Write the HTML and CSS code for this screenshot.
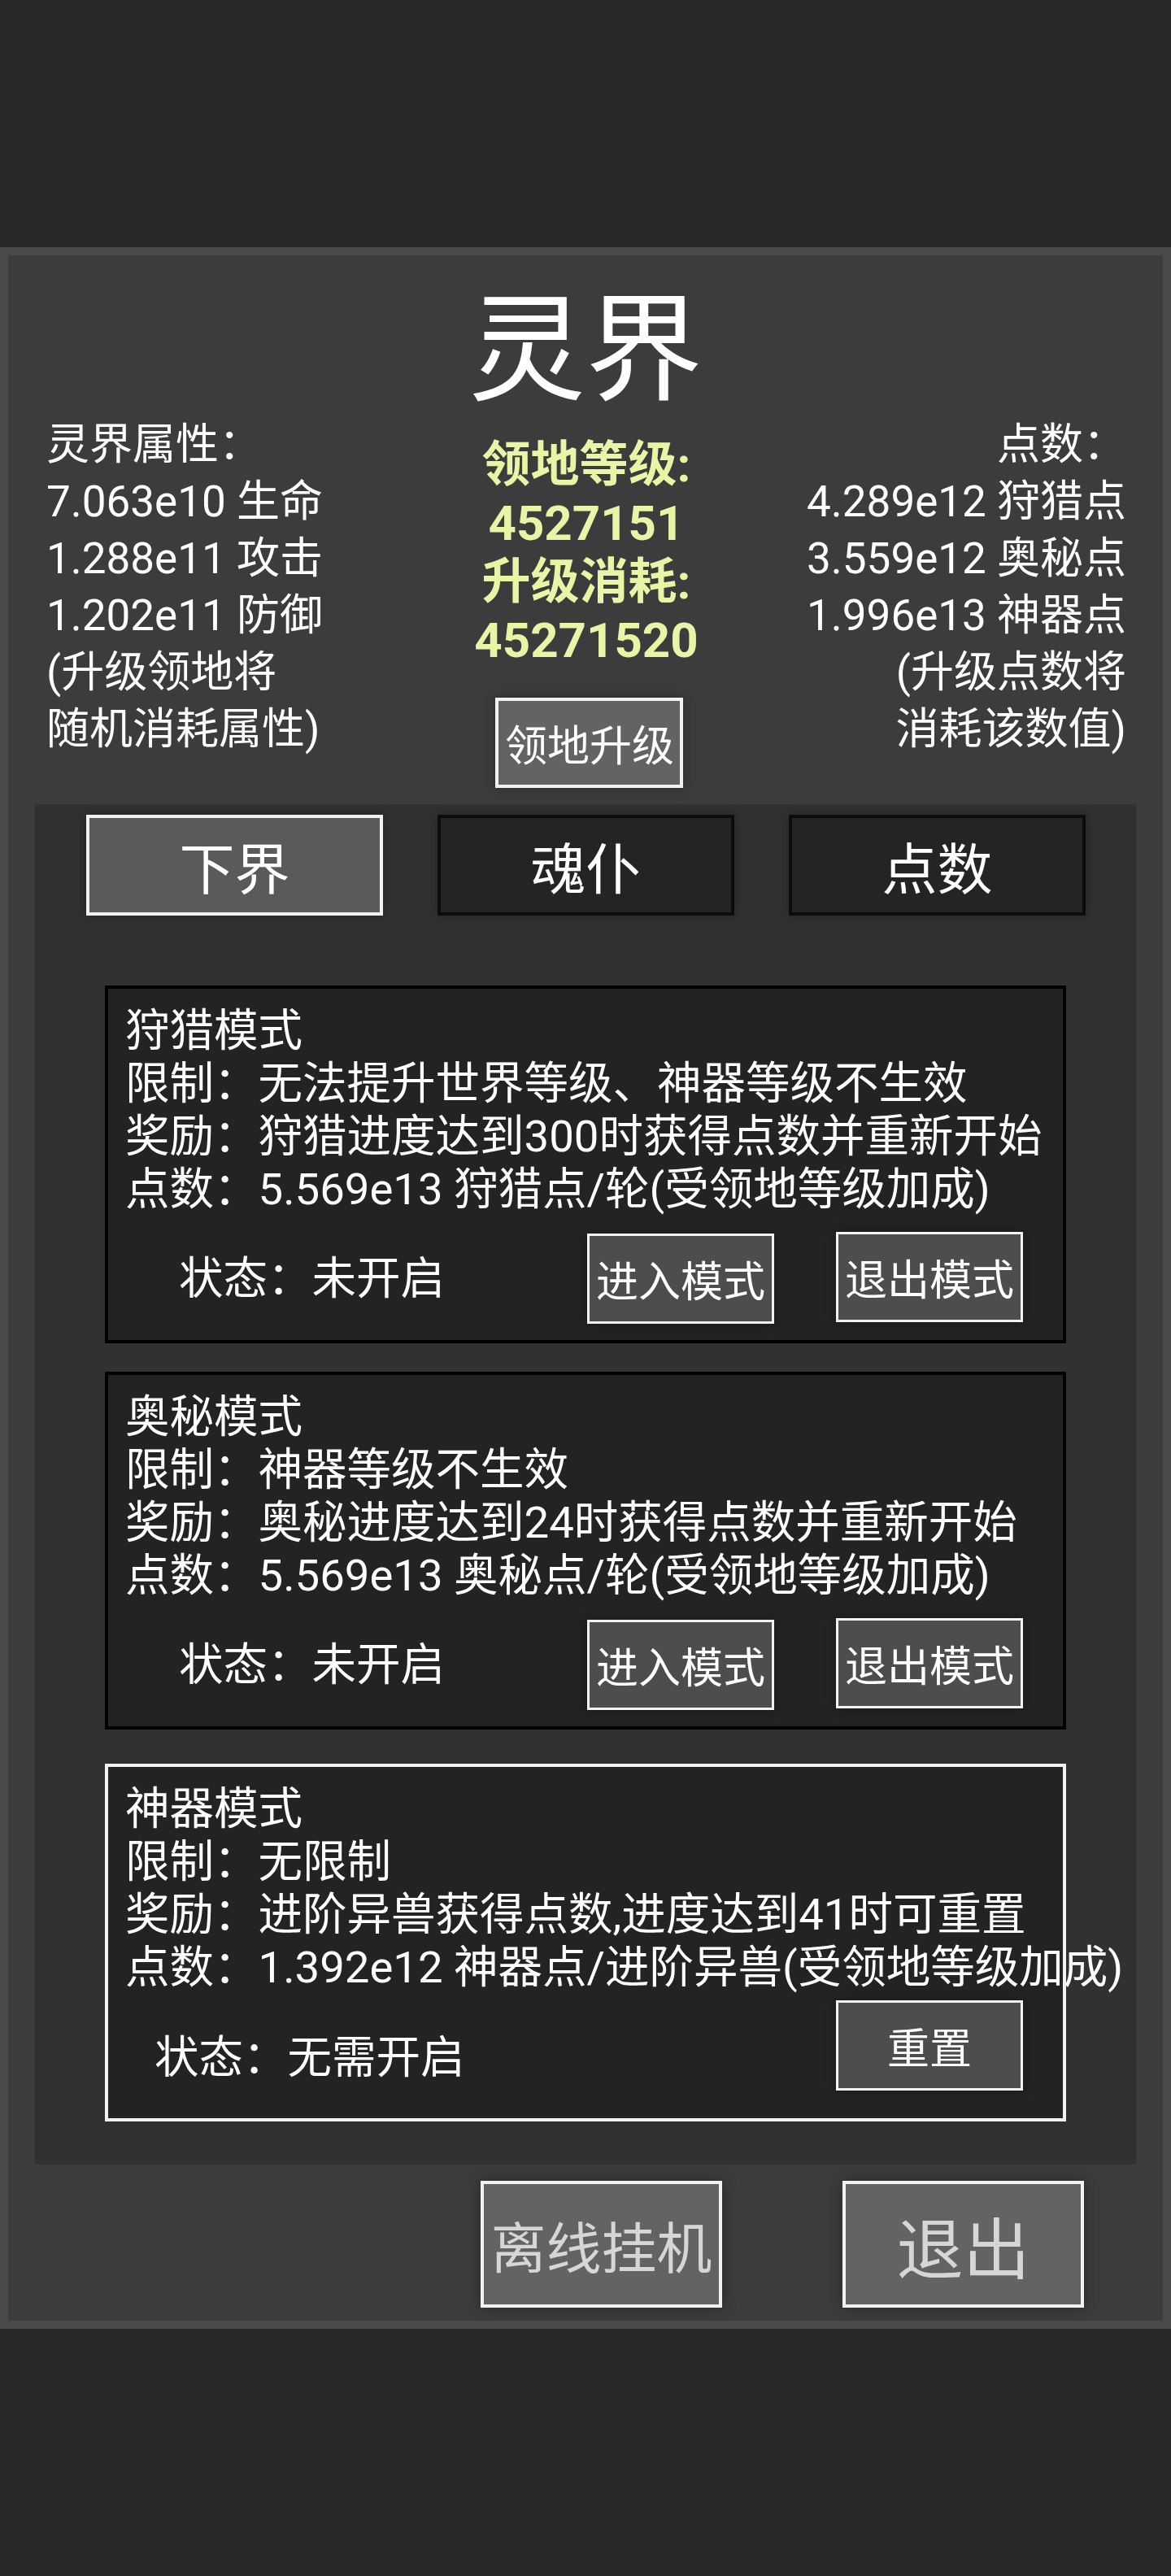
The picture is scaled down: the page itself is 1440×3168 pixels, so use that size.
FILE: index.html
```html
<!DOCTYPE html>
<html lang="zh-CN">
<head>
  <meta charset="UTF-8">
  <meta name="viewport" content="width=device-width, initial-scale=1.0">
  <title>灵界</title>
  <link rel="stylesheet" href="styles.css">
</head>
<body>
  <div id="realm" class="panel">
    <h1 class="title">灵界</h1>

    <div class="info">
      <div class="attrs">
        <p>灵界属性：</p>
        <p>7.063e10 生命</p>
        <p>1.288e11 攻击</p>
        <p>1.202e11 防御</p>
        <p>(升级领地将</p>
        <p>随机消耗属性)</p>
      </div>

      <div class="level">
        <p class="level-text">领地等级:</p>
        <p class="level-text">4527151</p>
        <p class="level-text">升级消耗:</p>
        <p class="level-text">45271520</p>
        <button id="upgrade-btn" class="upgrade-btn">领地升级</button>
      </div>

      <div class="points">
        <p>点数：</p>
        <p>4.289e12 狩猎点</p>
        <p>3.559e12 奥秘点</p>
        <p>1.996e13 神器点</p>
        <p>(升级点数将</p>
        <p>消耗该数值)</p>
      </div>
    </div>

    <div class="tab-box">
      <div class="tabs">
        <button class="tab active">下界</button>
        <button class="tab">魂仆</button>
        <button class="tab">点数</button>
      </div>

      <div class="modes">
        <div class="card">
          <p>狩猎模式</p>
          <p>限制：无法提升世界等级、神器等级不生效</p>
          <p>奖励：狩猎进度达到300时获得点数并重新开始</p>
          <p>点数：5.569e13 狩猎点/轮(受领地等级加成)</p>
          <div class="status-row">
            <span class="status">状态：未开启</span>
            <button class="mode-btn enter">进入模式</button>
            <button class="mode-btn leave">退出模式</button>
          </div>
        </div>

        <div class="card">
          <p>奥秘模式</p>
          <p>限制：神器等级不生效</p>
          <p>奖励：奥秘进度达到24时获得点数并重新开始</p>
          <p>点数：5.569e13 奥秘点/轮(受领地等级加成)</p>
          <div class="status-row">
            <span class="status">状态：未开启</span>
            <button class="mode-btn enter">进入模式</button>
            <button class="mode-btn leave">退出模式</button>
          </div>
        </div>

        <div class="card artifact">
          <p>神器模式</p>
          <p>限制：无限制</p>
          <p>奖励：进阶异兽获得点数,进度达到41时可重置</p>
          <p>点数：1.392e12 神器点/进阶异兽(受领地等级加成)</p>
          <div class="status-row">
            <span class="status">状态：无需开启</span>
            <button class="mode-btn enter">重置</button>
          </div>
        </div>
      </div>
    </div>

    <div class="footer">
      <button class="footer-btn">离线挂机</button>
      <button class="footer-btn exit-btn">退出</button>
    </div>
  </div>
</body>
</html>
```

FILE: styles.css
```css
* {
  margin: 0;
  padding: 0;
  box-sizing: border-box;
}

body {
  font-family: Roboto, "Noto Sans CJK SC", sans-serif;
  background: #282828;
  color: white;
  min-height: 3168px;
}

button {
  font-family: inherit;
  color: white;
  display: flex;
  justify-content: center;
  align-items: center;
  cursor: pointer;
}

.panel {
  margin-top: 304px;
  border: 10px solid #4a4a4a;
  background: #3c3c3c;
  padding: 0 33px 16px;
}

.title {
  font-size: 144px;
  line-height: 144px;
  font-weight: normal;
  text-align: center;
  padding-top: 46px;
}

.info {
  display: grid;
  grid-template-columns: 1fr auto 1fr;
  margin-top: 8px;
  padding: 0 12px 0 14px;
}

.attrs, .points {
  font-size: 53px;
  line-height: 70px;
  white-space: nowrap;
}

.points {
  text-align: right;
}

.level {
  display: flex;
  flex-direction: column;
  align-items: center;
  padding-top: 24px;
}

.level-text {
  color: #e6f6a6;
  font-weight: bold;
  font-size: 60px;
  line-height: 72px;
}

.upgrade-btn {
  margin: 34px 0 0 8px;
  width: 231px;
  height: 111px;
  border: 4px solid #f2f2f2;
  background: #636363;
  font-size: 52px;
  box-shadow: 0 0 14px rgba(0, 0, 0, 0.3);
}

.tab-box {
  margin-top: 20px;
  background: #313131;
  padding: 13px 0 53px;
}

.tabs {
  display: flex;
  gap: 67px;
  padding-left: 63px;
}

.tab {
  width: 365px;
  height: 124px;
  border: 4px solid #0c0c0c;
  background: #242424;
  font-size: 68px;
  box-shadow: 0 0 12px rgba(0, 0, 0, 0.3);
}

.tab.active {
  background: #5a5a5a;
  border-color: #f2f2f2;
}

.modes {
  margin: 86px 86px 0;
}

.card {
  height: 440px;
  border: 4px solid #000;
  background: #232323;
  padding: 19px 20px 0 21px;
  font-size: 54.5px;
  line-height: 65px;
  white-space: nowrap;
}

.card + .card {
  margin-top: 35px;
}

.card.artifact {
  margin-top: 42px;
  border-color: #f2f2f2;
}

.status-row {
  display: flex;
  align-items: center;
  margin-top: 22px;
  padding-right: 29px;
}

.status {
  margin-left: 66px;
  margin-right: auto;
}

.artifact .status-row {
  align-items: flex-start;
  margin-top: 8px;
}

.artifact .status {
  margin-left: 36px;
  margin-top: 38px;
}

.mode-btn {
  width: 230px;
  height: 111px;
  border: 3px solid #f2f2f2;
  background: #4d4d4d;
  font-size: 52px;
  box-shadow: 0 0 12px rgba(0, 0, 0, 0.3);
}

.mode-btn + .mode-btn {
  margin-left: 76px;
}

.mode-btn.leave {
  margin-top: -4px;
}

.footer {
  display: flex;
  justify-content: flex-end;
  gap: 148px;
  margin-top: 20px;
  padding-right: 64px;
}

.footer-btn {
  width: 297px;
  height: 156px;
  border: 4px solid #f2f2f2;
  background: #636363;
  color: #d6d6d6;
  font-size: 68px;
  box-shadow: 0 0 16px rgba(0, 0, 0, 0.35);
}

.exit-btn {
  font-size: 82px;
}
```
